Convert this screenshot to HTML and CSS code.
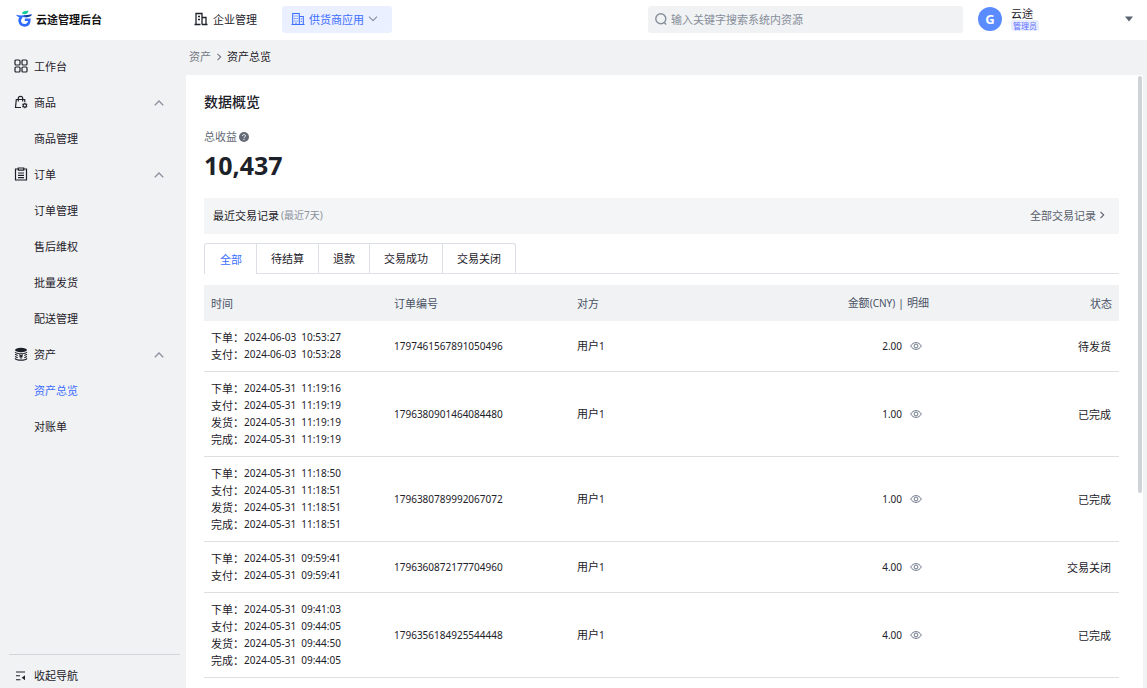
FILE: index.html
```html
<!DOCTYPE html>
<html lang="zh-CN">
<head>
<meta charset="utf-8">
<meta name="viewport" content="width=device-width, initial-scale=1">
<title>资产总览</title>
<link rel="stylesheet" href="styles.css">
</head>
<body>
<svg class="sprite" aria-hidden="true">
  <symbol id="i-up" viewBox="0 0 12 12"><path d="M1.800 9.200 6 5l4.200 4.200" fill="none" stroke="currentColor" stroke-width="1.300"/></symbol>
  <symbol id="i-down" viewBox="0 0 12 12"><path d="M2 3.700 6 7.700 10 3.700" fill="none" stroke="currentColor" stroke-width="1.200"/></symbol>
  <symbol id="i-right" viewBox="0 0 8 8"><path d="M2.500 .8 5.700 4 2.500 7.200" fill="none" stroke="currentColor" stroke-width="1.100"/></symbol>
  <symbol id="i-eye" viewBox="0 0 12 12"><path d="M.7 6C2 3.700 3.900 2.600 6 2.600S10 3.700 11.300 6C10 8.300 8.100 9.400 6 9.400S2 8.300.7 6Z" fill="none" stroke="currentColor" stroke-width="1"/><circle cx="6" cy="6" r="1.900" fill="none" stroke="currentColor" stroke-width="1"/></symbol>
</svg>
<div class="app">
  <header class="topbar">
    <a class="brand" href="#">
      <svg class="brand-mark" viewBox="0 0 16 18">
        <path d="M6 3.600C6.400 1.600 8.300.6 12.600.8 12 3.300 10.500 4.200 8.400 4.200 7.500 4.200 6.700 4.100 6 3.600Z" fill="#12c99b"/>
        <path d="M5.700 6.800C3.400 8.300 3.400 10.600 3.900 12.200c.7 2.200 2.600 3.200 4.700 3.200 3.200 0 4.700-2.200 4.700-5.600H8.800" fill="none" stroke="#2f6bff" stroke-width="2.600"/>
        <path d="M0 4.700c2.500.8 5 .8 8.200.6L16 4.600c-.8 1.700-2.400 2.400-5 2.600l-3.600.1C4 7.400 1.200 7.200 0 4.700Z" fill="#2f6bff"/>
        <path d="M7.600 5.400 16 4.600c-.8 1.700-2.400 2.400-5 2.600-1.400.1-2.600-.6-3.400-1.800Z" fill="#1b3f9e"/>
      </svg>
      <span>云途管理后台</span>
    </a>
    <nav class="topnav" aria-label="应用">
      <a class="toplink" href="#">
        <svg class="icon-m" viewBox="0 0 14 14" fill="none" stroke="currentColor" stroke-width="1.300"><path d="M2 12.500V1.500h6v11M8 5.500h4v7M.5 12.500h6M8 12.500h5.500M4 4.500h2M4 7.500h2"/></svg>
        企业管理
      </a>
      <button class="appswitch" type="button">
        <svg class="icon-m" viewBox="0 0 14 14" fill="none" stroke="currentColor" stroke-width="1.100"><path d="M1.700 12.500V1.500h6.600v11M8.300 4.500h4v8M.5 12.500h13M3.300 4h1.200M5.500 4h1.200M3.300 6.500h1.200M5.500 6.500h1.200M3.300 9h1.200M5.500 9h1.200M9.700 7h1.200M9.700 9.500h1.200M5 10.500v2"/></svg>
        供货商应用
        <svg class="icon-s muted"><use href="#i-down"/></svg>
      </button>
    </nav>
    <label class="search">
      <svg class="icon-m" viewBox="0 0 14 14" fill="none" stroke="currentColor" stroke-width="1.400"><circle cx="6.800" cy="6.800" r="5"/><path d="m10 10.300 2.200 2.200"/></svg>
      <input type="search" aria-label="搜索" placeholder="输入关键字搜索系统内资源">
    </label>
    <button class="account" type="button">
      <span class="avatar">G</span>
      <span class="who"><span class="name">云途</span><span class="role">管理员</span></span>
      <svg class="caret" viewBox="0 0 8 6"><path d="M0 .5h8L4 5.500Z" fill="currentColor"/></svg>
    </button>
  </header>

  <aside class="sidebar">
    <nav class="menu" aria-label="主菜单">
      <a class="item" href="#"><svg class="icon-m" viewBox="0 0 14 14" fill="none" stroke="currentColor" stroke-width="1.200"><rect x="1" y="1" width="5" height="5" rx="1"/><rect x="8" y="1" width="5" height="5" rx="1"/><rect x="1" y="8" width="5" height="5" rx="1"/><rect x="8" y="8" width="5" height="5" rx="1"/></svg>工作台</a>
      <button class="item" type="button"><svg class="icon-m" viewBox="0 0 14 14" fill="none" stroke="currentColor" stroke-width="1.200"><path d="M7 12.500H1.500l.8-8h8.400l.2 2.500M4.300 6.500V3.300c0-2.700 4.400-2.700 4.400 0v3.200"/><circle cx="10.800" cy="10.500" r="1.700"/><path d="M10.800 7.700v1.100M10.800 12.200v1.100M8.400 9.100l.9.500M12.300 11.400l.9.500M8.400 11.900l.9-.5M12.300 9.600l.9-.5"/></svg>商品<svg class="icon-s fold"><use href="#i-up"/></svg></button>
      <a class="item sub" href="#">商品管理</a>
      <button class="item" type="button"><svg class="icon-m" viewBox="0 0 14 14" fill="none" stroke="currentColor" stroke-width="1.200"><path d="M4.300 2H1.500v11h11V2H9.700M4.300 1h5.400v2.200H4.300ZM4 6h6M4 8.300h6M4 10.600h6"/></svg>订单<svg class="icon-s fold"><use href="#i-up"/></svg></button>
      <a class="item sub" href="#">订单管理</a>
      <a class="item sub" href="#">售后维权</a>
      <a class="item sub" href="#">批量发货</a>
      <a class="item sub" href="#">配送管理</a>
      <button class="item" type="button"><svg class="icon-m" viewBox="0 0 14 14" fill="none" stroke="currentColor" stroke-width="1.100"><ellipse cx="7" cy="3" rx="6" ry="2.200" fill="currentColor" stroke="none"/><path d="M1 5c1 1.300 3 1.700 6 1.700s5-.4 6-1.700M1 7.300l2.700 1.300M13 7.300l-2.700 1.300M1 9.500l2.700 1.200M13 9.500l-2.700 1.200M1 11.300c1 1.300 3 1.800 6 1.800s5-.5 6-1.800M5.300 7.500 7 9.300l1.700-1.800M7 9.300v2.500M5.300 9.800h3.400"/></svg>资产<svg class="icon-s fold"><use href="#i-up"/></svg></button>
      <a class="item sub active" href="#" aria-current="page">资产总览</a>
      <a class="item sub" href="#">对账单</a>
    </nav>
    <button class="collapse" type="button"><svg class="icon-m" viewBox="0 0 14 14"><path d="M2 3h9M2 6.700h4M2 10.700h4.500" stroke="currentColor" stroke-width="1.100"/><path d="M11 6.200v5L7.700 8.700Z" fill="currentColor"/></svg>收起导航</button>
  </aside>

  <main class="main">
    <nav class="crumbs" aria-label="面包屑">
      <a href="#">资产</a><svg class="icon-xs"><use href="#i-right"/></svg><span class="here">资产总览</span>
    </nav>
    <div class="panel">
      <div class="scrollbar"></div>
      <h1 class="title">数据概览</h1>
      <p class="stat-label">总收益
        <svg class="help" viewBox="0 0 10 10"><circle cx="5" cy="5" r="5" fill="currentColor"/><path d="M3.500 4C3.500 2 6.500 2 6.500 3.900 6.500 4.900 5 4.900 5 6.100M5 6.900v1.100" fill="none" stroke="#fff" stroke-width="1"/></svg>
      </p>
      <p class="stat">10,437</p>
      <div class="section">
        <h2 class="section-title">最近交易记录</h2><span class="range">(最近7天)</span>
        <a class="more" href="#">全部交易记录 <svg class="icon-xs"><use href="#i-right"/></svg></a>
      </div>
      <div class="tabs" role="tablist">
        <button class="tab selected" type="button" role="tab" aria-selected="true">全部</button>
        <button class="tab" type="button" role="tab">待结算</button>
        <button class="tab" type="button" role="tab">退款</button>
        <button class="tab" type="button" role="tab">交易成功</button>
        <button class="tab" type="button" role="tab">交易关闭</button>
      </div>
      <table class="records">
        <thead>
          <tr><th>时间</th><th>订单编号</th><th>对方</th><th class="end">金额<span class="num">(CNY)</span> | 明细</th><th class="end">状态</th></tr>
        </thead>
        <tbody>
          <tr>
            <td><div class="log"><span>下单：</span><time>2024-06-03</time><time>10:53:27</time></div><div class="log"><span>支付：</span><time>2024-06-03</time><time>10:53:28</time></div></td>
            <td class="num">1797461567891050496</td><td>用户<span class="num">1</span></td>
            <td><div class="amount"><span class="num">2.00</span><button class="view" type="button" aria-label="明细"><svg class="icon-s"><use href="#i-eye"/></svg></button></div></td><td class="end">待发货</td>
          </tr>
          <tr>
            <td><div class="log"><span>下单：</span><time>2024-05-31</time><time>11:19:16</time></div><div class="log"><span>支付：</span><time>2024-05-31</time><time>11:19:19</time></div><div class="log"><span>发货：</span><time>2024-05-31</time><time>11:19:19</time></div><div class="log"><span>完成：</span><time>2024-05-31</time><time>11:19:19</time></div></td>
            <td class="num">1796380901464084480</td><td>用户<span class="num">1</span></td>
            <td><div class="amount"><span class="num">1.00</span><button class="view" type="button" aria-label="明细"><svg class="icon-s"><use href="#i-eye"/></svg></button></div></td><td class="end">已完成</td>
          </tr>
          <tr>
            <td><div class="log"><span>下单：</span><time>2024-05-31</time><time>11:18:50</time></div><div class="log"><span>支付：</span><time>2024-05-31</time><time>11:18:51</time></div><div class="log"><span>发货：</span><time>2024-05-31</time><time>11:18:51</time></div><div class="log"><span>完成：</span><time>2024-05-31</time><time>11:18:51</time></div></td>
            <td class="num">1796380789992067072</td><td>用户<span class="num">1</span></td>
            <td><div class="amount"><span class="num">1.00</span><button class="view" type="button" aria-label="明细"><svg class="icon-s"><use href="#i-eye"/></svg></button></div></td><td class="end">已完成</td>
          </tr>
          <tr>
            <td><div class="log"><span>下单：</span><time>2024-05-31</time><time>09:59:41</time></div><div class="log"><span>支付：</span><time>2024-05-31</time><time>09:59:41</time></div></td>
            <td class="num">1796360872177704960</td><td>用户<span class="num">1</span></td>
            <td><div class="amount"><span class="num">4.00</span><button class="view" type="button" aria-label="明细"><svg class="icon-s"><use href="#i-eye"/></svg></button></div></td><td class="end">交易关闭</td>
          </tr>
          <tr>
            <td><div class="log"><span>下单：</span><time>2024-05-31</time><time>09:41:03</time></div><div class="log"><span>支付：</span><time>2024-05-31</time><time>09:44:05</time></div><div class="log"><span>发货：</span><time>2024-05-31</time><time>09:44:50</time></div><div class="log"><span>完成：</span><time>2024-05-31</time><time>09:44:05</time></div></td>
            <td class="num">1796356184925544448</td><td>用户<span class="num">1</span></td>
            <td><div class="amount"><span class="num">4.00</span><button class="view" type="button" aria-label="明细"><svg class="icon-s"><use href="#i-eye"/></svg></button></div></td><td class="end">已完成</td>
          </tr>
        </tbody>
      </table>
    </div>
  </main>
</div>
</body>
</html>
```
FILE: styles.css
```css
* { box-sizing: border-box; }

body {
  margin: 0;
  font: 11px/17px "Noto Sans", "Noto Sans CJK SC", sans-serif;
  color: #1d2129;
  background: #f1f2f4;
}

button, input { font: inherit; color: inherit; border: 0; background: none; padding: 0; }
button { cursor: pointer; }
a { color: inherit; text-decoration: none; }
h1, h2, p { margin: 0; }
svg { flex: none; }

.sprite { position: absolute; width: 0; height: 0; }
.icon-m { width: 14px; height: 14px; }
.icon-s { width: 12px; height: 12px; display: block; }
.icon-xs { width: 8px; height: 8px; }
.muted { color: #8a93a3; }

.app {
  display: grid;
  grid-template: auto 1fr / 186px 1fr;
  height: 100vh;
  overflow: hidden;
}

/* Top bar */
.topbar {
  grid-column: 1 / -1;
  display: flex;
  align-items: center;
  height: 40px;
  padding-bottom: 2px;
  background: #fff;
}
.brand {
  display: flex;
  align-items: center;
  gap: 4px;
  width: 194px;
  padding-left: 16px;
  font-weight: 700;
  color: #111;
}
.brand-mark { width: 16px; height: 18px; }
.topnav { display: flex; align-items: center; gap: 25px; }
.toplink { display: flex; align-items: center; gap: 5px; }
.appswitch {
  display: flex;
  align-items: center;
  gap: 4px;
  height: 27px;
  padding: 0 13px 0 9px;
  border-radius: 3px;
  background: #eaf0ff;
  color: #3d6eff;
}
.appswitch .muted { margin-left: -1px; }
.search {
  display: flex;
  align-items: center;
  gap: 3px;
  width: 315px;
  height: 27px;
  margin-left: auto;
  padding: 0 6px;
  border-radius: 3px;
  background: #f1f2f4;
  color: #868e9a;
}
.search input { flex: 1; min-width: 0; outline: 0; }
.search input::placeholder { color: #868e9a; opacity: 1; }
.account {
  display: flex;
  align-items: center;
  width: 184px;
  padding: 0 14px 0 15px;
  text-align: left;
}
.avatar {
  width: 24px;
  height: 24px;
  border-radius: 50%;
  background: #5b8cff;
  color: #fff;
  font: 700 13px/24px "Noto Sans", sans-serif;
  text-align: center;
}
.who { display: flex; flex-direction: column; align-items: flex-start; margin-left: 9px; line-height: 13px; }
.role {
  padding: 0 2px;
  border-radius: 2px;
  background: #e8eeff;
  color: #5b6cff;
  font-size: 8px;
  line-height: 11px;
}
.caret { width: 8px; height: 6px; margin-left: auto; color: #5a6270; }

/* Sidebar */
.sidebar { display: flex; flex-direction: column; padding: 8px 6px 0 9px; min-height: 0; }
.menu { flex: 1; display: flex; flex-direction: column; }
.item {
  display: flex;
  align-items: center;
  gap: 6px;
  height: 36px;
  padding: 0 15px 0 5px;
  text-align: left;
}
.sub { padding-left: 25px; }
.active { color: #3d6eff; }
.fold { margin-left: auto; color: #8a919c; }
.collapse {
  display: flex;
  align-items: center;
  gap: 6px;
  height: 34px;
  padding: 8px 5px 0;
  border-top: 1px solid #d3d5d9;
}

/* Main area */
.main { display: flex; flex-direction: column; min-width: 0; min-height: 0; padding-right: 4px; }
.crumbs { display: flex; align-items: center; gap: 4px; height: 35px; padding: 0 0 2px 3px; color: #737a85; }
.here { color: #1d2129; }
.panel {
  position: relative;
  flex: 1;
  min-height: 0;
  overflow: hidden;
  padding: 16px 24px 0 18px;
  background: #fff;
}
.scrollbar {
  position: absolute;
  top: 1px;
  right: 1px;
  width: 4px;
  height: 68%;
  border-radius: 2px;
  background: #cfd2d6;
}
.title { font-size: 14px; font-weight: 500; line-height: 22px; }
.stat-label { display: flex; align-items: center; gap: 2px; margin-top: 15px; color: #646b76; }
.help { width: 10px; height: 10px; }
.stat { margin: 5px 0 18px; font-size: 25px; font-weight: 700; line-height: 30px; }

.section {
  display: flex;
  align-items: center;
  gap: 2px;
  height: 36px;
  padding: 0 13px 2px 9px;
  background: #f4f5f7;
}
.section-title { font-size: 11px; font-weight: 400; }
.range { font-size: 10px; color: #8a919c; }
.more { display: flex; align-items: center; gap: 2px; margin-left: auto; color: #5a616c; }

.tabs { display: flex; margin: 9px 0 11px; border-bottom: 1px solid #dfe1e6; }
.tab {
  height: 30px;
  padding: 0 14px;
  border: solid #dcdfe6;
  border-width: 1px 1px 0 0;
}
.tab:first-child { padding-left: 15px; border-left-width: 1px; border-top-left-radius: 3px; }
.tab:last-child { border-top-right-radius: 3px; }
.selected { height: 31px; margin-bottom: -1px; background: #fff; color: #3d6eff; }

/* Records */
.records { width: 100%; table-layout: fixed; border-collapse: separate; border-spacing: 0; }
.records th {
  height: 36px;
  padding: 0 7px;
  background: #f1f2f4;
  color: #4a5265;
  font-weight: 400;
  text-align: left;
}
.records td { padding: 8px; border-bottom: 1px solid #dddfe2; vertical-align: middle; }
.records td:not(.end) { padding-left: 7px; }
.records .end { text-align: right; }
.log { display: flex; }
.log time, .num { font-size: 10px; }
.log time + time { margin-left: 5px; }
.amount { display: flex; align-items: center; justify-content: flex-end; gap: 8px; padding-right: 6px; }
.view { color: #6f7a8c; }
```
